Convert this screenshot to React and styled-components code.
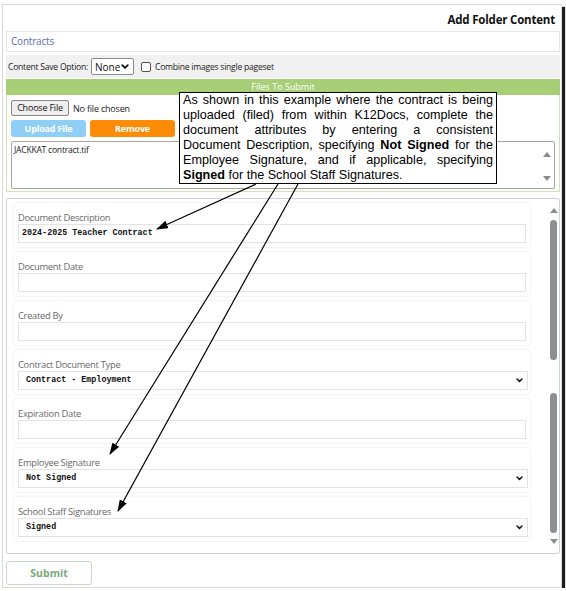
import React from 'react';
import styled, { createGlobalStyle } from 'styled-components';

const GlobalStyle = createGlobalStyle`
  html, body { margin: 0; padding: 0; background: #fff; }
  body { font-family: "Open Sans", "Noto Sans", sans-serif; color: #222; }
  * { box-sizing: border-box; }
`;

const Frame = styled.div`
  position: relative;
  margin: 4px 0 0 2px;
  width: 560px;
  height: 584px;
  border: 1px solid #d9d9d9;
  box-shadow: 3px 3px 1px #1f1f1f;
  background: #fff;
  padding: 0 1px 0 3px;
  display: flex;
  flex-direction: column;
`;

const Title = styled.h1`
  margin: 0;
  padding: 7px 5px 3px 0;
  font-size: 11.5px;
  line-height: 16px;
  font-weight: 700;
  letter-spacing: -0.2px;
  text-align: right;
  color: #111;
`;

const FolderBox = styled.div`
  height: 21px;
  border: 1px solid #e6e6e6;
  padding: 0 4px;
  font-size: 10px;
  line-height: 19px;
  letter-spacing: -0.2px;
  color: #5b6cbc;
`;

const OptionsRow = styled.div`
  margin-top: 3px;
  height: 23px;
  background: #f1f1f1;
  display: flex;
  align-items: center;
  padding-left: 2px;
  font-size: 8.6px;
  letter-spacing: -0.25px;
  color: #222;
`;

const SmallSelect = styled.div`
  margin-left: 3px;
  width: 43px;
  height: 17px;
  border: 1px solid #8a8a8a;
  border-radius: 2px;
  background: #fff;
  display: flex;
  align-items: center;
  justify-content: space-between;
  padding: 0 4px 0 3px;
  font-size: 10px;
  letter-spacing: 0;
  color: #111;
`;

const CheckBox = styled.span`
  display: inline-block;
  width: 10px;
  height: 10px;
  margin: 0 4px 0 7px;
  border: 1px solid #555;
  border-radius: 2px;
  background: #fff;
`;

const SectionBar = styled.div`
  margin-top: 1px;
  height: 16px;
  background: #a8cf78;
  color: #fff;
  font-size: 9px;
  line-height: 16px;
  text-align: center;
`;

const UploadBox = styled.div`
  border: 1px solid #cfe5b6;
  border-top: none;
  padding: 5px 4px 2px 4px;
  display: flex;
  flex-direction: column;
  gap: 4px;
`;

const FileRow = styled.div`
  display: flex;
  align-items: center;
  gap: 4px;
  font-size: 9px;
  letter-spacing: -0.2px;
  color: #222;
`;

const ChooseButton = styled.span`
  height: 16px;
  width: 58px;
  border: 1px solid #8a8a8a;
  border-radius: 2px;
  background: #efefef;
  line-height: 14px;
  font-size: 9px;
  text-align: center;
  color: #111;
`;

const ActionRow = styled.div`
  display: flex;
  gap: 4px;
`;

const ActionButton = styled.span`
  width: ${p => p.$w}px;
  height: 17px;
  border-radius: 3px;
  background: ${p => p.$bg};
  color: #fff;
  font-size: 9px;
  font-weight: 700;
  letter-spacing: -0.2px;
  line-height: 17px;
  text-align: center;
`;

const FileList = styled.div`
  height: 48px;
  border: 1px solid #a5a5a5;
  border-radius: 2px;
  display: flex;
  justify-content: space-between;
  padding: 2px 3px 5px 2px;
  font-size: 8.6px;
  letter-spacing: -0.25px;
  color: #222;
`;

const ArrowCol = styled.div`
  display: flex;
  flex-direction: column;
  justify-content: space-between;
  padding: ${p => p.$pad || '8px 0 2px'};
  align-items: center;
`;

const Tri = styled.span`
  width: 0;
  height: 0;
  border-left: 4px solid transparent;
  border-right: 4px solid transparent;
  ${p => (p.$down ? 'border-top: 5px solid #8c8c8c;' : 'border-bottom: 5px solid #8c8c8c;')}
`;

const FormPanel = styled.div`
  margin-top: 6px;
  height: 356px;
  border: 1px solid #cad4e2;
  border-radius: 2px;
  display: flex;
  padding: 3px 1px 0 6px;
`;

const FieldList = styled.div`
  width: 518px;
  display: flex;
  flex-direction: column;
  gap: 3px;
`;

const FieldGroup = styled.div`
  border: 1px solid #f5f5f5;
  border-radius: 4px;
  padding: 9px 4px 4px 4px;
`;

const FieldLabel = styled.div`
  font-size: 9.4px;
  line-height: 12px;
  letter-spacing: -0.3px;
  color: #6b6b6b;
`;

const TextInput = styled.div`
  height: 19px;
  border: 1px solid #e3e3e3;
  background: #fff;
  padding: 0 3px;
  font-family: "Liberation Mono", "DejaVu Sans Mono", monospace;
  font-weight: 700;
  font-size: 8.4px;
  line-height: 17px;
  color: #111;
`;

const SelectInput = styled(TextInput)`
  width: 510px;
  display: flex;
  align-items: center;
  justify-content: space-between;
  padding: 0 4px 0 7px;
`;

const ScrollTrack = styled.div`
  margin-left: auto;
  width: 9px;
  display: flex;
  flex-direction: column;
  align-items: center;
  padding-top: 6px;
`;

const Thumb = styled.span`
  width: 7px;
  height: 140px;
  border-radius: 4px;
  background: #8f8f8f;
  margin-top: ${p => p.$mt}px;
`;

const SubmitButton = styled.span`
  margin-top: 7px;
  width: 86px;
  height: 24px;
  border: 1px solid #c7dcc7;
  border-radius: 3px;
  color: #78a978;
  font-size: 10.5px;
  font-weight: 700;
  line-height: 22px;
  text-align: center;
`;

const Callout = styled.div`
  position: absolute;
  left: 176px;
  top: 87px;
  width: 318px;
  height: 92px;
  border: 1px solid #000;
  background: #fff;
  padding: 0 3px;
  font-family: "Liberation Sans", Arial, sans-serif;
  font-size: 12.6px;
  line-height: 15px;
  color: #000;
  z-index: 2;
`;

const CalloutLine = styled.div`
  white-space: nowrap;
  text-align: ${p => (p.$last ? 'left' : 'justify')};
  text-align-last: ${p => (p.$last ? 'left' : 'justify')};
`;

const Arrows = styled.svg`
  position: absolute;
  left: -1px;
  top: -1px;
  pointer-events: none;
  z-index: 1;
`;

const Chevron = ({ size = 7 }) => (
  <svg width={size} height={size * 0.7} viewBox="0 0 10 7">
    <polyline points="1.5,1.5 5,5 8.5,1.5" fill="none" stroke="#111" strokeWidth="2.2" strokeLinecap="round" strokeLinejoin="round" />
  </svg>
);

const fields = [
  { label: 'Document Description', value: '2024-2025 Teacher Contract' },
  { label: 'Document Date', value: '' },
  { label: 'Created By', value: '' },
  { label: 'Contract Document Type', value: 'Contract - Employment', select: true },
  { label: 'Expiration Date', value: '' },
  { label: 'Employee Signature', value: 'Not Signed', select: true },
  { label: 'School Staff Signatures', value: 'Signed', select: true },
];

const pointers = [
  [256, 184, 157, 229],
  [278, 184, 110, 454],
  [298, 184, 118, 511],
];

export default function App() {
  return (
    <>
      <GlobalStyle />
      <Frame>
        <Title>Add Folder Content</Title>
        <FolderBox>Contracts</FolderBox>
        <OptionsRow>
          Content Save Option:
          <SmallSelect>
            None <Chevron size={8} />
          </SmallSelect>
          <CheckBox />
          Combine images single pageset
        </OptionsRow>
        <SectionBar>Files To Submit</SectionBar>
        <UploadBox>
          <FileRow>
            <ChooseButton>Choose File</ChooseButton>
            No file chosen
          </FileRow>
          <ActionRow>
            <ActionButton $w={75} $bg="#8fcff6">Upload File</ActionButton>
            <ActionButton $w={85} $bg="#fd8b06">Remove</ActionButton>
          </ActionRow>
          <FileList>
            <span>JACKKAT contract.tif</span>
            <ArrowCol>
              <Tri />
              <Tri $down />
            </ArrowCol>
          </FileList>
        </UploadBox>
        <FormPanel>
          <FieldList>
            {fields.map(f => (
              <FieldGroup key={f.label}>
                <FieldLabel>{f.label}</FieldLabel>
                {f.select ? (
                  <SelectInput>
                    <span>{f.value}</span>
                    <Chevron />
                  </SelectInput>
                ) : (
                  <TextInput>{f.value}</TextInput>
                )}
              </FieldGroup>
            ))}
          </FieldList>
          <ScrollTrack>
            <Tri />
            <Thumb $mt={7} />
            <Thumb $mt={33} />
            <ArrowCol $pad="6px 0 0">
              <Tri $down />
            </ArrowCol>
          </ScrollTrack>
        </FormPanel>
        <SubmitButton>Submit</SubmitButton>

        <Arrows width="566" height="591" viewBox="2 4 566 591">
          <defs>
            <marker id="tip" markerUnits="userSpaceOnUse" markerWidth="12" markerHeight="8" refX="11" refY="4" orient="auto">
              <path d="M0,0 L12,4 L0,8 z" fill="#000" />
            </marker>
          </defs>
          {pointers.map(([x1, y1, x2, y2], i) => (
            <line key={i} x1={x1} y1={y1} x2={x2} y2={y2} stroke="#000" strokeWidth="1.2" markerEnd="url(#tip)" />
          ))}
        </Arrows>
        <Callout>
          <CalloutLine>As shown in this example where the contract is being</CalloutLine>
          <CalloutLine>uploaded (filed) from within K12Docs, complete the</CalloutLine>
          <CalloutLine>document attributes by entering a consistent</CalloutLine>
          <CalloutLine>Document Description, specifying <b>Not Signed</b> for the</CalloutLine>
          <CalloutLine>Employee Signature, and if applicable, specifying</CalloutLine>
          <CalloutLine $last><b>Signed</b> for the School Staff Signatures.</CalloutLine>
        </Callout>
      </Frame>
    </>
  );
}
